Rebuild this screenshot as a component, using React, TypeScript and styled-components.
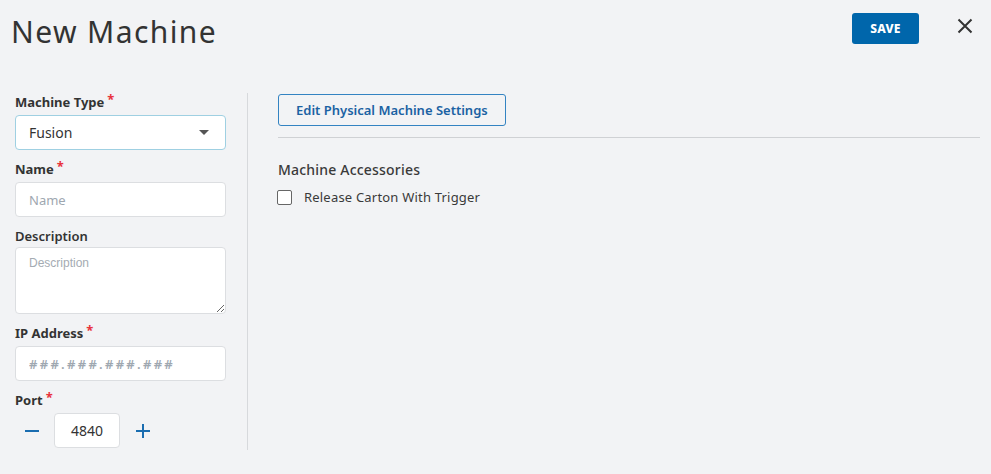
import React from "react";
import styled, { createGlobalStyle } from "styled-components";

const Global = createGlobalStyle`
  html, body { margin: 0; padding: 0; background: #f2f3f5; }
  body { font-family: "Noto Sans", "Liberation Sans", sans-serif; color: #333; }
  * { box-sizing: border-box; }
`;

const Page = styled.div`
  width: 991px;
  height: 474px;
  background: #f2f3f5;
  display: flex;
  flex-direction: column;
`;

const Header = styled.header`
  display: flex;
  align-items: flex-start;
  padding: 13px 17px 0 11px;
  height: 92px;
`;

const Title = styled.h1`
  flex: 1;
  margin: 0;
  padding-top: 1px;
  font-size: 30px;
  line-height: 36px;
  font-weight: 400;
  letter-spacing: 1.4px;
  color: #333;
`;

const SaveButton = styled.button`
  width: 67px;
  height: 31px;
  border: none;
  border-radius: 3px;
  background: #0066ab;
  color: #fff;
  font-family: "Noto Sans", sans-serif;
  font-weight: 800;
  font-size: 12px;
  letter-spacing: 0.2px;
  cursor: pointer;
`;

const CloseButton = styled.button`
  margin-left: 37px;
  margin-top: 4px;
  width: 18px;
  height: 18px;
  padding: 0;
  border: none;
  background: transparent;
  display: flex;
  align-items: center;
  justify-content: center;
  cursor: pointer;
`;

const Body = styled.div`
  display: flex;
  padding: 0 11px 0 15px;
`;

const FormColumn = styled.div`
  width: 233px;
  padding-right: 21px;
  margin-top: 1px;
  border-right: 1px solid #d7d9dc;
  display: flex;
  flex-direction: column;
  height: 357px;
`;

const Field = styled.div`
  display: flex;
  flex-direction: column;
  margin-bottom: 10px;
`;

const Label = styled.label<{ $required?: boolean }>`
  font-size: 13px;
  line-height: 18px;
  font-weight: ${(p) => (p.$required ? 700 : 600)};
  color: #333;
  margin-bottom: ${(p) => (p.$required ? 4 : 2)}px;
  display: flex;
  align-items: flex-start;
`;

const Star = styled.span`
  color: #e8323c;
  font-size: 13px;
  line-height: 12px;
  margin-left: 3px;
`;

const inputBase = `
  width: 100%;
  background: #fff;
  border: 1px solid #dcdee1;
  border-radius: 4px;
  font-family: "Noto Sans", "Liberation Sans", sans-serif;
  font-size: 13px;
  color: #333;
  outline: none;
  &::placeholder { color: #a4abb2; }
`;

const SelectBox = styled.div`
  ${inputBase}
  height: 35px;
  border-color: #9fd0e2;
  display: flex;
  align-items: center;
  justify-content: space-between;
  padding: 0 16px 0 13px;
  font-size: 14px;
`;

const Caret = styled.span`
  width: 0;
  height: 0;
  border-left: 5px solid transparent;
  border-right: 5px solid transparent;
  border-top: 5px solid #555;
`;

const TextInput = styled.input<{ $spaced?: boolean }>`
  ${inputBase}
  height: 35px;
  padding: 0 13px;
  letter-spacing: ${(p) => (p.$spaced ? "2.3px" : "0")};
  &::placeholder { color: #9ea7b0; font-weight: ${(p) => (p.$spaced ? 600 : 400)}; }
`;

const TextArea = styled.textarea`
  ${inputBase}
  height: 67px;
  padding: 8px 13px;
  resize: vertical;
  font-size: 12px;
  font-family: "Liberation Sans", sans-serif;
`;

const PortRow = styled.div`
  display: flex;
  align-items: center;
  gap: 6px;
`;

const StepButton = styled.button`
  width: 33px;
  height: 35px;
  padding: 0;
  border: none;
  background: transparent;
  display: flex;
  align-items: center;
  justify-content: center;
  cursor: pointer;
`;

const PortInput = styled.input`
  ${inputBase}
  width: 66px;
  height: 35px;
  text-align: center;
  font-size: 14px;
`;

const Panel = styled.div`
  flex: 1;
  padding-left: 30px;
  padding-top: 2px;
  display: flex;
  flex-direction: column;
  align-items: flex-start;
`;

const OutlineButton = styled.button`
  height: 32px;
  padding: 0 17px;
  background: transparent;
  border: 1px solid #3383c2;
  border-radius: 3px;
  color: #1b62a3;
  font-family: "Noto Sans", sans-serif;
  font-size: 13px;
  font-weight: 600;
  cursor: pointer;
`;

const Rule = styled.hr`
  align-self: stretch;
  margin: 11px 0 0;
  border: none;
  border-top: 1px solid #cfd1d4;
`;

const SectionTitle = styled.h2`
  margin: 22px 0 0;
  font-size: 14px;
  line-height: 20px;
  font-weight: 500;
  letter-spacing: 0.2px;
  color: #3a3a3a;
`;

const CheckRow = styled.label`
  display: flex;
  align-items: center;
  margin-top: 8px;
  font-size: 13px;
  letter-spacing: 0.2px;
  color: #3a3a3a;
  cursor: pointer;
`;

const CheckBox = styled.span`
  width: 15px;
  height: 15px;
  border: 1px solid #666;
  border-radius: 2px;
  background: #fff;
  margin-left: -1px;
  margin-right: 12px;
`;

export default function App() {
  return (
    <Page>
      <Global />
      <Header>
        <Title>New Machine</Title>
        <SaveButton>SAVE</SaveButton>
        <CloseButton aria-label="Close">
          <svg width="16" height="16" viewBox="0 0 16 16">
            <path d="M1.5 1.5 L14.5 14.5 M14.5 1.5 L1.5 14.5" stroke="#333" strokeWidth="2" />
          </svg>
        </CloseButton>
      </Header>
      <Body>
        <FormColumn>
          <Field>
            <Label $required>
              Machine Type<Star>*</Star>
            </Label>
            <SelectBox>
              <span>Fusion</span>
              <Caret />
            </SelectBox>
          </Field>
          <Field>
            <Label $required>
              Name<Star>*</Star>
            </Label>
            <TextInput placeholder="Name" />
          </Field>
          <Field>
            <Label>Description</Label>
            <TextArea placeholder="Description" />
          </Field>
          <Field>
            <Label $required>
              IP Address<Star>*</Star>
            </Label>
            <TextInput $spaced placeholder="###.###.###.###" />
          </Field>
          <Field>
            <Label $required>
              Port<Star>*</Star>
            </Label>
            <PortRow>
              <StepButton aria-label="Decrease">
                <svg width="14" height="14" viewBox="0 0 14 14">
                  <path d="M0 7 H14" stroke="#1a6db0" strokeWidth="2" />
                </svg>
              </StepButton>
              <PortInput defaultValue="4840" />
              <StepButton aria-label="Increase">
                <svg width="14" height="14" viewBox="0 0 14 14">
                  <path d="M0 7 H14 M7 0 V14" stroke="#1a6db0" strokeWidth="2" />
                </svg>
              </StepButton>
            </PortRow>
          </Field>
        </FormColumn>
        <Panel>
          <OutlineButton>Edit Physical Machine Settings</OutlineButton>
          <Rule />
          <SectionTitle>Machine Accessories</SectionTitle>
          <CheckRow>
            <CheckBox />
            Release Carton With Trigger
          </CheckRow>
        </Panel>
      </Body>
    </Page>
  );
}
